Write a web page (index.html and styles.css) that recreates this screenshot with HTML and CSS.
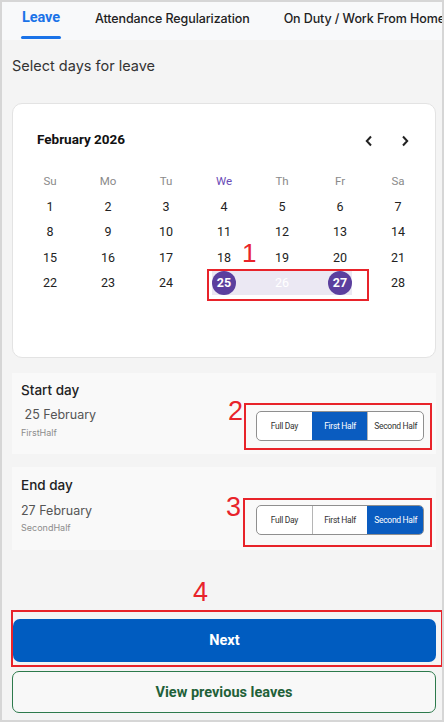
FILE: index.html
```html
<!DOCTYPE html>
<html lang="en">
<head>
<meta charset="utf-8">
<title>Leave</title>
<link rel="stylesheet" href="styles.css">
</head>
<body>
<div class="frame">
  <nav class="tabs">
    <div class="tab active">Leave</div>
    <div class="tab">Attendance Regularization</div>
    <div class="tab">On Duty / Work From Home</div>
  </nav>
  <main class="content">
    <h2 class="page-title">Select days for leave</h2>

    <section class="cal-card">
      <div class="cal-head">
        <span class="month">February 2026</span>
        <div class="cal-nav">
          <svg width="10" height="12" viewBox="0 0 10 12"><path d="M7 1.5 L2.8 6 L7 10.5" fill="none" stroke="#222" stroke-width="2"/></svg>
          <svg width="10" height="12" viewBox="0 0 10 12"><path d="M3 1.5 L7.2 6 L3 10.5" fill="none" stroke="#222" stroke-width="2"/></svg>
        </div>
      </div>
      <div class="grid weekdays">
        <span>Su</span><span>Mo</span><span>Tu</span><span class="today">We</span><span>Th</span><span>Fr</span><span>Sa</span>
      </div>
      <div class="grid days">
        <span>1</span><span>2</span><span>3</span><span>4</span><span>5</span><span>6</span><span>7</span>
        <span>8</span><span>9</span><span>10</span><span>11</span><span>12</span><span>13</span><span>14</span>
        <span>15</span><span>16</span><span>17</span><span>18</span><span>19</span><span>20</span><span>21</span>
        <span>22</span><span>23</span><span>24</span>
        <span class="range start"><b>25</b></span>
        <span class="range mid">26</span>
        <span class="range end"><b>27</b></span>
        <span>28</span>
      </div>
      <div class="anno-box cal-anno"></div>
      <span class="anno-num num1">1</span>
    </section>

    <section class="day-card start-card">
      <div class="day-info">
        <div class="day-title">Start day</div>
        <div class="day-date">&nbsp;25 February</div>
        <div class="day-part">FirstHalf</div>
      </div>
      <div class="anno-wrap seg-anno">
        <span class="anno-num num2">2</span>
        <div class="segmented">
          <span>Full Day</span>
          <span class="on">First Half</span>
          <span>Second Half</span>
        </div>
      </div>
    </section>

    <section class="day-card end-card">
      <div class="day-info">
        <div class="day-title">End day</div>
        <div class="day-date">27 February</div>
        <div class="day-part">SecondHalf</div>
      </div>
      <div class="anno-wrap seg-anno end-anno">
        <span class="anno-num num3">3</span>
        <div class="segmented">
          <span>Full Day</span>
          <span>First Half</span>
          <span class="on">Second Half</span>
        </div>
      </div>
    </section>

    <div class="anno-wrap next-anno">
      <span class="anno-num num4">4</span>
      <button class="btn-next">Next</button>
    </div>
    <button class="btn-prev">View previous leaves</button>
  </main>
</div>
</body>
</html>
```

FILE: styles.css
```css
* { box-sizing: border-box; }
html, body { margin: 0; padding: 0; }
body { width: 444px; height: 722px; overflow: hidden; background: #f4f4f4; font-family: Roboto, "Liberation Sans", sans-serif; }

.frame {
  width: 444px; height: 722px;
  border: 2px solid #d6d6d6;
  background: #f4f4f4;
  overflow: hidden;
  display: flex; flex-direction: column;
}

.tabs {
  height: 38px;
  background: #f8f9fa;
  display: flex;
  gap: 34px;
  padding-left: 19px;
  white-space: nowrap;
  overflow: hidden;
  flex: none;
}
.tab {
  font-family: Inter, "Open Sans", sans-serif;
  font-size: 12.5px;
  font-weight: 500;
  color: #222;
  padding-top: 9px;
  letter-spacing: -0.1px;
}
.tab.active {
  color: #1a73e8;
  font-family: Roboto, sans-serif;
  font-weight: 700;
  font-size: 14.5px;
  padding-top: 7px;
  position: relative;
  padding-left: 1px;
  padding-right: 1px;
}
.tab.active::after {
  content: "";
  position: absolute;
  left: 0; right: 0; bottom: 1px;
  height: 3px;
  border-radius: 2px;
  background: #1a73e8;
}

.content {
  padding: 0 6px 0 10px;
  flex: 1;
}
.page-title {
  margin: 17px 0 0 0;
  font-family: Inter, "Open Sans", sans-serif;
  font-weight: 400;
  font-size: 14.5px;
  line-height: 18px;
  color: #333;
}

.cal-card {
  position: relative;
  margin-top: 28px;
  height: 255px;
  background: #fff;
  border: 1px solid #e3e3e3;
  border-radius: 10px;
  padding: 26px 8px 0 8px;
}
.cal-head {
  display: flex;
  align-items: center;
  justify-content: space-between;
  height: 18px;
  padding: 0 17px 0 16px;
}
.month { font-weight: 700; font-size: 13.5px; color: #111; }
.cal-nav { display: flex; gap: 26px; padding-top: 4px; }

.grid {
  display: grid;
  grid-template-columns: repeat(7, 1fr);
  text-align: center;
}
.weekdays { margin-top: 20px; height: 26px; align-items: center; font-size: 11.5px; color: #8a8a8a; }
.weekdays .today { color: #6a4bb6; }
.days { grid-auto-rows: 25.5px; align-items: center; font-size: 12.5px; color: #222; }
.days span { height: 24px; line-height: 24px; }
.range { background: #ebe8f3; color: #fff; }
.range.start { background: linear-gradient(to right, transparent calc(50% - 12px), #ebe8f3 calc(50% - 12px)); }
.range.end { background: linear-gradient(to right, #ebe8f3 calc(50% + 12px), transparent calc(50% + 12px)); }
.range b {
  display: inline-block;
  width: 24px; height: 24px;
  border-radius: 50%;
  background: #5b3f9e;
  color: #fff;
  font-weight: 700;
  line-height: 24px;
}

.anno-box { position: absolute; border: 2px solid #e8232a; }
.cal-anno { left: 194px; top: 165px; width: 162px; height: 32px; }
.anno-num {
  position: absolute;
  font-family: "Liberation Sans", Arial, sans-serif;
  font-size: 27px;
  line-height: 27px;
  color: #e8232a;
}
.num1 { left: 229px; top: 136px; font-size: 26px; }

.day-card {
  display: flex;
  justify-content: space-between;
  background: #f9f9f9;
  padding: 0 4px 0 9px;
}
.start-card { margin-top: 15px; height: 81px; }
.end-card { margin-top: 13px; height: 83px; }
.day-info { padding-top: 8px; }
.day-title { font-family: Inter, "Open Sans", sans-serif; font-weight: 500; font-size: 13.5px; color: #222; line-height: 18px; }
.day-date { font-family: Inter, "Open Sans", sans-serif; font-size: 12.5px; color: #555; margin-top: 7px; line-height: 18px; }
.day-part { font-family: Inter, "Open Sans", sans-serif; font-size: 9px; color: #8c8c8c; margin-top: 3px; line-height: 12px; }
.end-card .day-info { padding-top: 9px; }
.end-card .day-date { margin-top: 8px; }
.end-card .day-part { margin-top: 2px; }

.anno-wrap { position: relative; border: 2px solid #e8232a; }
.seg-anno { align-self: flex-end; margin-bottom: 4px; padding: 6px 6px 7px 10px; }
.end-anno { margin-bottom: 3px; padding: 5px 6px 10px 11px; }
.num2 { left: -18px; top: -7px; }
.num3 { left: -19px; top: -6px; }
.num4 { left: 180px; top: -33px; }

.segmented {
  display: flex;
  width: 168px;
  height: 30px;
  border: 1px solid #8f8f8f;
  border-radius: 5px;
  overflow: hidden;
  background: #fff;
}
.segmented span {
  flex: 1;
  display: flex; align-items: center; justify-content: center;
  font-family: Roboto, sans-serif;
  font-size: 8.5px;
  letter-spacing: -0.3px;
  color: #333;
  border-left: 1px solid #b5b5b5;
}
.segmented span:first-child { border-left: none; }
.segmented span.on { background: #0a5cc0; color: #fff; border-left-color: #0a5cc0; }

.next-anno { margin: 60px -7px 0 -1px; padding: 7px 5px 3px 0; }
.btn-next {
  display: block;
  width: 100%;
  height: 43px;
  border: none;
  border-radius: 7px;
  background: #005cc0;
  color: #fff;
  font-family: Roboto, sans-serif;
  font-weight: 700;
  font-size: 14.5px;
}
.btn-prev {
  display: block;
  width: 100%;
  height: 42px;
  margin-top: 4px;
  border: 1.5px solid #2d7a4c;
  border-radius: 7px;
  background: #f8f8f8;
  color: #1f6139;
  font-family: Roboto, sans-serif;
  font-weight: 700;
  font-size: 14.5px;
}
```
